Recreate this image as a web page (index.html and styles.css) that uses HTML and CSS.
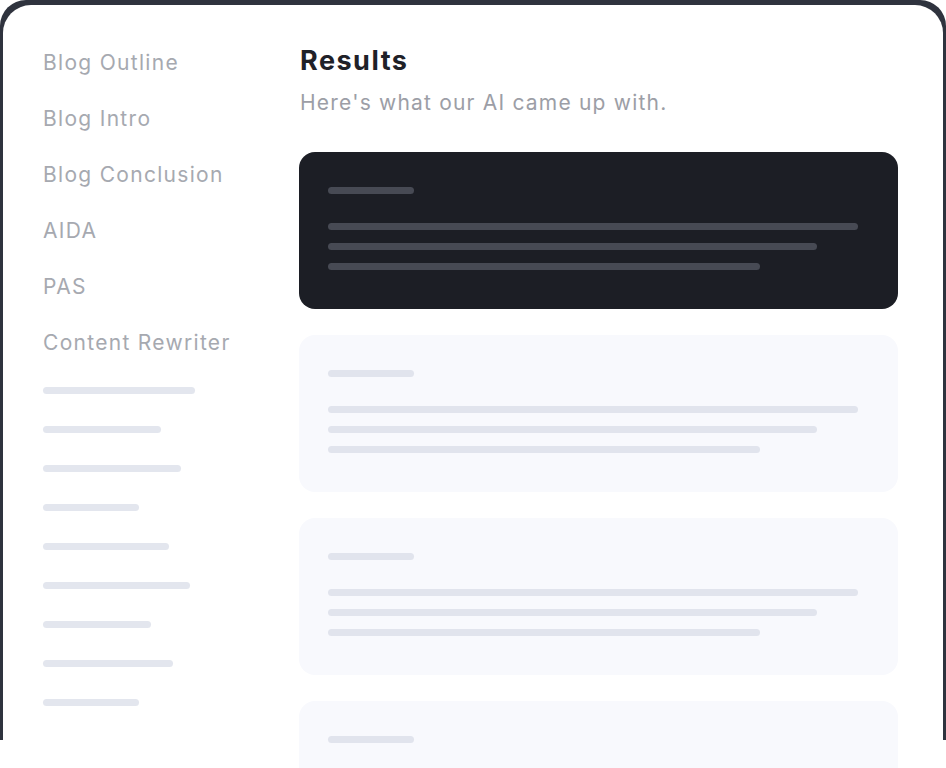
FILE: index.html
```html
<!DOCTYPE html>
<html lang="en">
<head>
<meta charset="utf-8">
<title>Results</title>
<link rel="stylesheet" href="styles.css">
</head>
<body>
<div class="frame">
  <div class="card">
    <aside class="sidebar">
      <ul class="menu">
        <li>Blog Outline</li>
        <li>Blog Intro</li>
        <li>Blog Conclusion</li>
        <li>AIDA</li>
        <li>PAS</li>
        <li>Content Rewriter</li>
      </ul>
      <ul class="skeleton-menu">
        <li><span class="bar w152"></span></li>
        <li><span class="bar w118"></span></li>
        <li><span class="bar w138"></span></li>
        <li><span class="bar w96"></span></li>
        <li><span class="bar w126"></span></li>
        <li><span class="bar w147"></span></li>
        <li><span class="bar w108"></span></li>
        <li><span class="bar w130"></span></li>
        <li><span class="bar w96"></span></li>
      </ul>
    </aside>
    <main class="main">
      <h1 class="title">Results</h1>
      <p class="subtitle">Here's what our AI came up with.</p>
      <div class="results">
        <div class="result dark">
          <span class="line short"></span>
          <div class="lines">
            <span class="line l1"></span>
            <span class="line l2"></span>
            <span class="line l3"></span>
          </div>
        </div>
        <div class="result">
          <span class="line short"></span>
          <div class="lines">
            <span class="line l1"></span>
            <span class="line l2"></span>
            <span class="line l3"></span>
          </div>
        </div>
        <div class="result">
          <span class="line short"></span>
          <div class="lines">
            <span class="line l1"></span>
            <span class="line l2"></span>
            <span class="line l3"></span>
          </div>
        </div>
        <div class="result">
          <span class="line short"></span>
          <div class="lines">
            <span class="line l1"></span>
            <span class="line l2"></span>
            <span class="line l3"></span>
          </div>
        </div>
      </div>
    </main>
  </div>
</div>
</body>
</html>
```
FILE: styles.css
```css
* { box-sizing: border-box; }

html, body {
  margin: 0;
  padding: 0;
  background: #ffffff;
  height: 768px;
  overflow: hidden;
}

body {
  font-family: Inter, "Noto Sans", "Liberation Sans", sans-serif;
}

.frame {
  width: 946px;
  height: 740px;
  background: #2f333e;
  border-radius: 26px 26px 0 0;
  padding: 5px 3px 0 3px;
}

.card {
  background: #ffffff;
  width: 940px;
  height: 763px;
  border-radius: 28px 28px 0 0;
  display: grid;
  grid-template-columns: 296px 1fr;
  padding: 30px 45px 0 0;
  overflow: hidden;
}

.sidebar {
  padding-left: 40px;
}

.menu, .skeleton-menu {
  list-style: none;
  margin: 0;
  padding: 0;
}

.menu li {
  height: 56px;
  line-height: 56px;
  font-size: 21px;
  color: #a6a9b0;
  letter-spacing: 1.3px;
  white-space: nowrap;
}

.skeleton-menu li {
  height: 39px;
  display: flex;
  align-items: center;
}

.bar {
  display: block;
  height: 7px;
  border-radius: 4px;
  background: #e3e6ee;
}

.w152 { width: 152px; }
.w118 { width: 118px; }
.w138 { width: 138px; }
.w96 { width: 96px; }
.w126 { width: 126px; }
.w147 { width: 147px; }
.w108 { width: 108px; }
.w130 { width: 130px; }

.main {
  padding-top: 8px;
  padding-left: 1px;
}

.title {
  margin: 0;
  font-size: 27px;
  line-height: 36px;
  font-weight: 700;
  color: #1f2128;
  letter-spacing: 1.5px;
}

.subtitle {
  margin: 10px 0 0 0;
  font-size: 21px;
  line-height: 28px;
  color: #9c9ea6;
  letter-spacing: 1.2px;
  white-space: nowrap;
}

.results {
  margin-top: 35px;
  margin-left: -1px;
  display: flex;
  flex-direction: column;
  gap: 26px;
}

.result {
  height: 157px;
  border-radius: 16px;
  background: #f8f9fd;
  padding: 35px 29px 0 29px;
}

.result .line {
  display: block;
  height: 7px;
  border-radius: 4px;
  background: #e1e4ed;
}

.result .short { width: 86px; }

.lines {
  margin-top: 29px;
  display: flex;
  flex-direction: column;
  gap: 13px;
}

.l1 { width: 530px; }
.l2 { width: 489px; }
.l3 { width: 432px; }

.result.dark {
  background: #1c1e25;
}

.result.dark .line {
  background: #474a54;
}
```
